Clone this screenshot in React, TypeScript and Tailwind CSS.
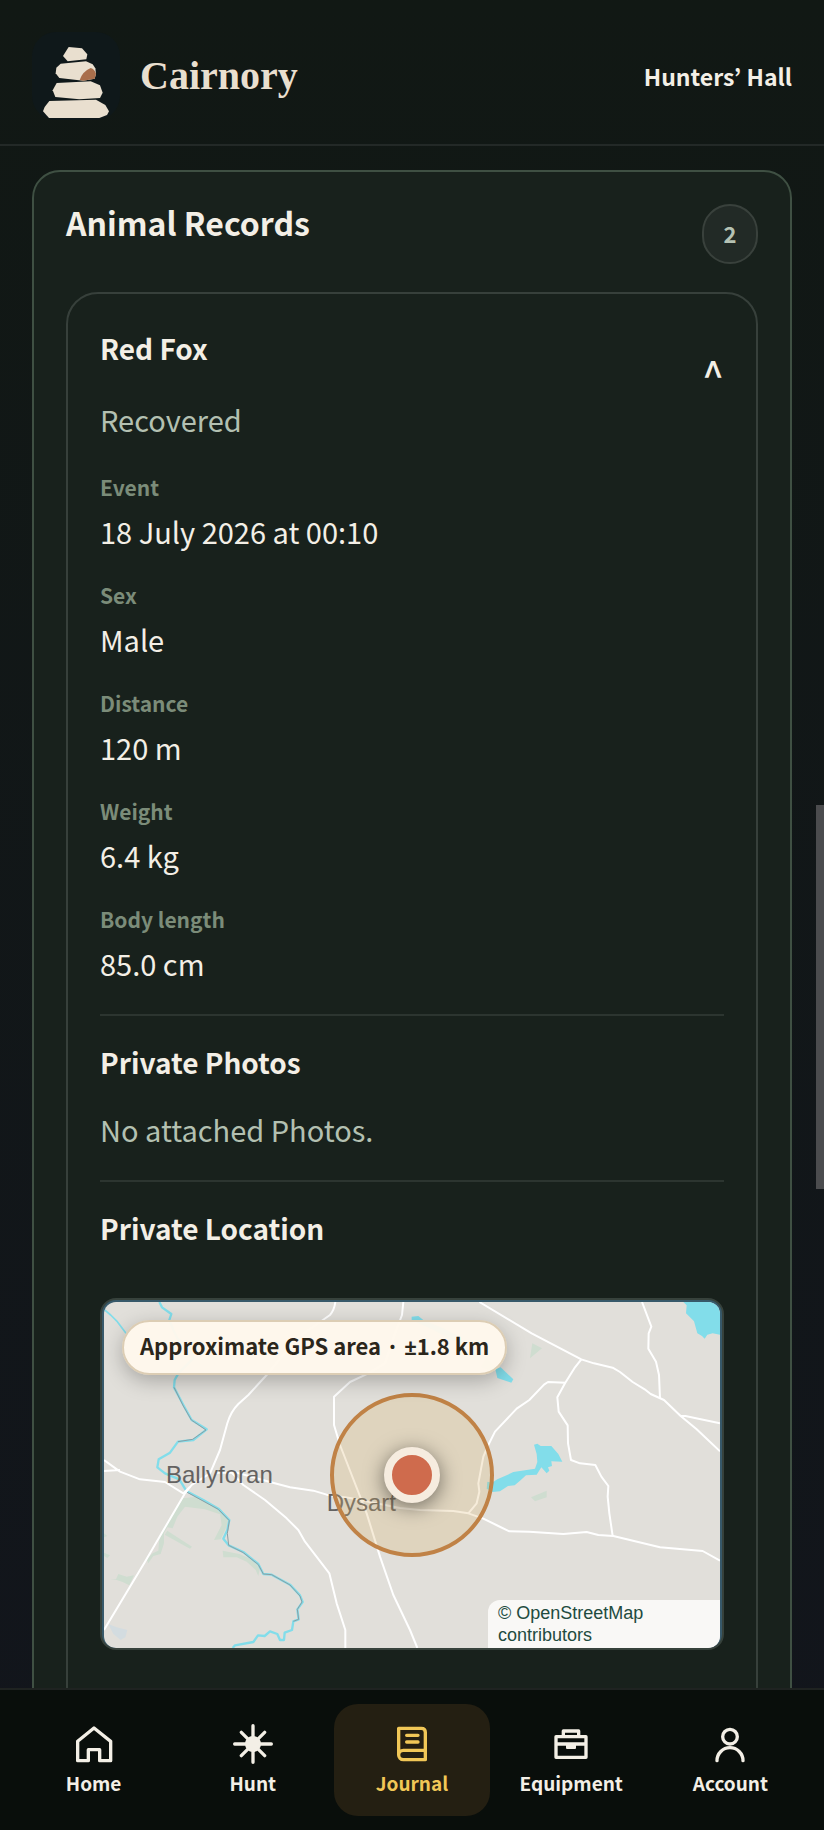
import React, { useState } from "react";

const details = [
  { label: "Event", value: "18 July 2026 at 00:10" },
  { label: "Sex", value: "Male" },
  { label: "Distance", value: "120 m" },
  { label: "Weight", value: "6.4 kg" },
  { label: "Body length", value: "85.0 cm" },
];

function CairnLogo() {
  return (
    <svg viewBox="96 96 264 264" className="size-22 rounded-3xl bg-[#0f181a]" aria-hidden="true">
      <g fill="#e9dfcf">
        <path d="M206 141L246 145L262 163L259 178L203 184L189 168Z" />
        <path d="M182 191L258 184L278 193L286 205L288 222L284 236L250 242L178 234L167 220L169 203Z" />
        <path d="M170 249L272 244L300 256L308 278L300 294L238 298L166 291L158 271Z" />
        <path d="M148 303L288 299L316 315L327 334L321 345L298 354H147L129 334L134 321Z" />
      </g>
      <path d="M239 240Q248 214 272 204Q284 208 288 221L284 236L250 242Z" fill="#a96e4b" />
    </svg>
  );
}

const icons: Record<string, React.ReactNode> = {
  Home: <path d="M11 110V52L60 12L110 52V110H77V77H43V110Z" />,
  Hunt: (
    <>
      <path d="M60 5V115M5 60H115M25 25L95 95M95 25L25 95" />
      <circle cx="60" cy="60" r="24" fill="currentColor" stroke="none" />
    </>
  ),
  Journal: (
    <path d="M20 93V13H88Q100 13 100 25V107H34A14 14 0 0 1 34 79H100M44 34H78M44 54H78" />
  ),
  Equipment: (
    <>
      <path d="M15 38H105V100H15ZM37 38V21H83V38M15 60H105" />
      <path d="M45 60H75V72Q75 75 72 75H48Q45 75 45 72Z" fill="currentColor" stroke="none" />
    </>
  ),
  Account: (
    <>
      <circle cx="60" cy="38" r="22" />
      <path d="M21 110A39 39 0 0 1 99 110" />
    </>
  ),
};

function NavItem({ name, active }: { name: string; active?: boolean }) {
  return (
    <a
      href="#"
      aria-current={active ? "page" : undefined}
      className={`flex h-28 flex-col items-center rounded-3xl pt-5 font-bold ${
        active ? "bg-[#241f12] text-[#f1c757]" : "text-[#f3efe6]"
      }`}
    >
      <svg
        viewBox="0 0 120 120"
        className="size-10"
        fill="none"
        stroke="currentColor"
        strokeWidth="10"
        strokeLinecap="round"
        strokeLinejoin="round"
        aria-hidden="true"
      >
        {icons[name]}
      </svg>
      <span className="mt-1 text-[19px] leading-[30px]">{name}</span>
    </a>
  );
}

function LocationMap() {
  return (
    <div className="mt-12 overflow-hidden rounded-2xl border-2 border-[#37423c] bg-[#37596a] px-0.5 pt-0.5">
      <div className="relative overflow-hidden rounded-[12px]">
        <svg
          viewBox="42 66 1848 1038"
          preserveAspectRatio="xMidYMid slice"
          className="block h-[346px] w-full bg-[#e1dfda]"
          role="img"
          aria-label="Map"
        >
          <g fill="#cfddd0">
            <path d="M275 655L325 650L390 685L415 715L410 740L392 778L372 780L395 735L390 703L345 688L285 680L262 710L248 745L232 742L222 760L222 790L212 822L190 828L175 850L170 838L188 820L205 812L208 775L240 715Z" />
            <path d="M232 752L306 800L300 806L224 764Z" />
            <path d="M398 812L448 822L490 840L510 865L505 888L497 870L470 845L440 832L400 832Z" />
            <path d="M62 900L78 898L85 882L110 890L132 886L118 916L98 906L80 900Z" />
            <path d="M42 760L52 768L42 772ZM42 818L60 826L52 834L42 828Z" />
            <path d="M1327 190L1356 205L1320 235Z" />
            <path d="M1323 652L1370 632V652L1335 664Z" />
            <path d="M1170 262L1190 232L1220 262L1210 276Z" />
          </g>
          <path d="M55 1032L80 1042L112 1050L106 1072L92 1080L70 1062Z" fill="#d3dce0" />
          <g fill="#82ddea">
            <path d="M1780 66L1790 76L1788 100L1812 124L1822 160L1836 168L1844 176L1852 164L1868 160L1890 164V66Z" />
            <path d="M965 110L985 108L1000 120L1060 145L1100 165L1120 190L1085 180L1030 150L965 120Z" />
            <path d="M1216 268L1232 262L1270 298L1264 308L1222 294Z" />
            <path d="M1332 494L1342 491L1352 498H1384L1405 522L1417 545L1384 544L1386 558L1374 562L1378 572L1370 580L1354 562L1340 584L1308 586L1290 602L1274 616L1254 618L1230 634L1208 636L1190 626L1192 605L1206 608L1222 598L1262 580L1270 576L1335 566L1342 546L1340 522Z" />
          </g>
          <g fill="none" strokeLinejoin="round">
            <path
              d="M208 66L216 82L244 102L238 120L250 150L262 175L300 205L310 235L265 280L254 300L252 322L280 375L305 420L350 448L310 480L264 485L240 518L206 538L202 562L225 580L268 598L290 634L340 660L385 686L418 720L412 750L400 776L416 796L460 816L505 852L520 882L545 884L600 914L630 946L638 966L622 988L626 1018L610 1024L606 1050L584 1058L582 1080H570L562 1062L540 1054L524 1068L504 1066L490 1086L435 1096L428 1104"
              stroke="#82ddea"
              strokeWidth="7"
            />
            <path
              d="M252 322L280 378L304 420L348 450L308 478L264 485M290 636L385 688L418 722L412 760L416 796L460 818L505 854L520 882L545 884L600 915L630 948L636 966L622 988L626 1018L610 1024"
              stroke="#8b9da3"
              strokeWidth="3"
            />
            <path d="M42 88L62 105L82 125L108 160" stroke="#82ddea" strokeWidth="5" />
            <g stroke="#fff" strokeWidth="6">
              <path d="M736 66Q733 90 720 105L690 126L620 175L530 285L475 345L445 372Q422 395 412 430L390 510L360 580L305 615L285 640L165 845L42 1050" />
              <path d="M42 540L90 575L150 598L225 606L280 640L300 620M42 573L90 570" />
              <path d="M430 575L540 606L600 622L670 632L710 644L780 654L930 684L990 690L1090 693L1135 700L1180 716L1225 738L1258 754L1318 755L1420 762L1490 756L1525 765L1570 768L1710 802L1838 813L1890 842" />
              <path d="M375 578H425L460 615L525 660L590 715L625 750L645 785L718 880L740 970L766 1050V1104" />
              <path d="M940 66L936 105L915 160L885 250L835 280L780 306L732 350V435L750 495L830 700L870 830L910 945L960 1050L982 1104" />
              <path d="M1168 66L1325 160L1474 238L1512 250L1568 263L1590 276L1628 306L1664 328L1682 342L1722 360L1772 408L1820 448L1890 514" />
              <path d="M1772 408H1786L1890 430" />
              <path d="M1656 66L1684 140L1676 160L1675 206L1698 245L1707 285L1710 356" />
              <path d="M1474 238L1455 262L1425 310L1402 352L1406 395L1433 436L1434 490L1443 540L1470 550L1516 555L1534 590L1555 618L1553 650L1558 700L1568 768" />
              <path d="M1427 308L1374 306L1362 314L1318 360L1280 386L1215 455L1195 495L1180 530L1165 610L1168 635L1160 670L1135 700" />
            </g>
          </g>
          <g className="fill-[#646261] font-['Liberation_Sans',sans-serif] text-[72px]">
            <text x="228" y="608">Ballyforan</text>
            <text x="710" y="692">Dysart</text>
          </g>
        </svg>

        <div className="absolute top-1/2 left-1/2 flex size-[164px] -translate-1/2 items-center justify-center rounded-full border-4 border-[#c08246] bg-[#dcb46c]/25">
          <span className="size-14 rounded-full border-8 border-[#f6ecdf] bg-[#cf6b4d] shadow-[0_4px_20px_rgba(0,0,0,0.5)]" />
        </div>

        <div className="absolute top-[18px] left-[18px] rounded-full border-2 border-[#dccdb4] bg-[#fff8ec]/96 px-4 pb-1 text-[22px] leading-[46px] font-bold text-[#2b261b] shadow-[0_6px_20px_rgba(0,0,0,0.25)]">
          Approximate GPS area · <span className="font-['Noto_Sans',sans-serif]">±</span>1.8 km
        </div>

        <div className="absolute right-0 bottom-0 w-[232px] rounded-tl-[12px] bg-[#f9f8f6] px-2.5 py-0.5 font-['Liberation_Sans',sans-serif] text-[18px] leading-[22px] text-[#224b3f]">
          © OpenStreetMap contributors
        </div>
      </div>
    </div>
  );
}

export default function App() {
  const [open, setOpen] = useState(true);

  return (
    <div className="flex h-screen flex-col overflow-hidden bg-linear-to-b from-[#111814] to-[#12151c] font-['Noto_Sans_CJK_KR',sans-serif] text-[29px] leading-[42px] text-[#f3efe6]">
      <header className="flex shrink-0 items-center justify-between border-b-2 border-[#232927] px-8 pt-8 pb-6">
        <a href="#" className="flex items-center gap-5">
          <CairnLogo />
          <span className="font-['Liberation_Serif',serif] text-[40px] leading-11 font-bold text-[#e9dfcf]">
            Cairnory
          </span>
        </a>
        <a href="#" className="text-[23px] font-bold">Hunters’ Hall</a>
      </header>

      <main className="min-h-0 flex-1 overflow-hidden px-8 pt-6">
        <section className="rounded-[28px] border-2 border-[#3f5043] bg-[#18211c] p-8">
          <div className="flex items-start justify-between">
            <h2 className="text-[32px] leading-9 font-bold">Animal Records</h2>
            <span className="flex h-15 w-14 items-center justify-center rounded-full border-2 border-[#39413c] bg-[#222a26] pb-0.5 text-[22px] font-bold text-[#b5c2b3]">
              2
            </span>
          </div>

          <article className="mt-7 rounded-[32px] border-2 border-[#37403b] p-8 pb-24">
            <div className="flex items-start justify-between">
              <div>
                <h3 className="text-[28px] leading-11 font-bold">Red Fox</h3>
                <p className="mt-7 text-[#b3c0b1]">Recovered</p>
              </div>
              <button
                type="button"
                aria-expanded={open}
                onClick={() => setOpen(!open)}
                className="h-24 text-[38px] font-medium"
              >
                ^
              </button>
            </div>

            {open && (
              <>
                <dl className="mt-[30px] flex flex-col gap-[26px]">
                  {details.map((d) => (
                    <div key={d.label}>
                      <dt className="text-[21px] leading-[34px] font-bold text-[#7b8c79]">{d.label}</dt>
                      <dd className="mt-1.5">{d.value}</dd>
                    </div>
                  ))}
                </dl>

                <section className="mt-[30px] border-t-2 border-[#2c3530] pt-6">
                  <h4 className="text-[28px] leading-11 font-bold">Private Photos</h4>
                  <p className="mt-6 text-[#b3c0b1]">No attached Photos.</p>
                </section>

                <section className="mt-[30px] border-t-2 border-[#2c3530] pt-6">
                  <h4 className="text-[28px] leading-11 font-bold">Private Location</h4>
                  <LocationMap />
                </section>
              </>
            )}
          </article>
        </section>
      </main>

      <nav className="grid shrink-0 grid-cols-5 gap-1 border-t-2 border-[#1f2321] bg-[#090e0b] px-4 py-3.5">
        <NavItem name="Home" />
        <NavItem name="Hunt" />
        <NavItem name="Journal" active />
        <NavItem name="Equipment" />
        <NavItem name="Account" />
      </nav>

      {/* scroll thumb */}
      <div className="fixed top-[44%] right-0 h-[21%] w-2 bg-[#4b4c4e]" />
    </div>
  );
}
